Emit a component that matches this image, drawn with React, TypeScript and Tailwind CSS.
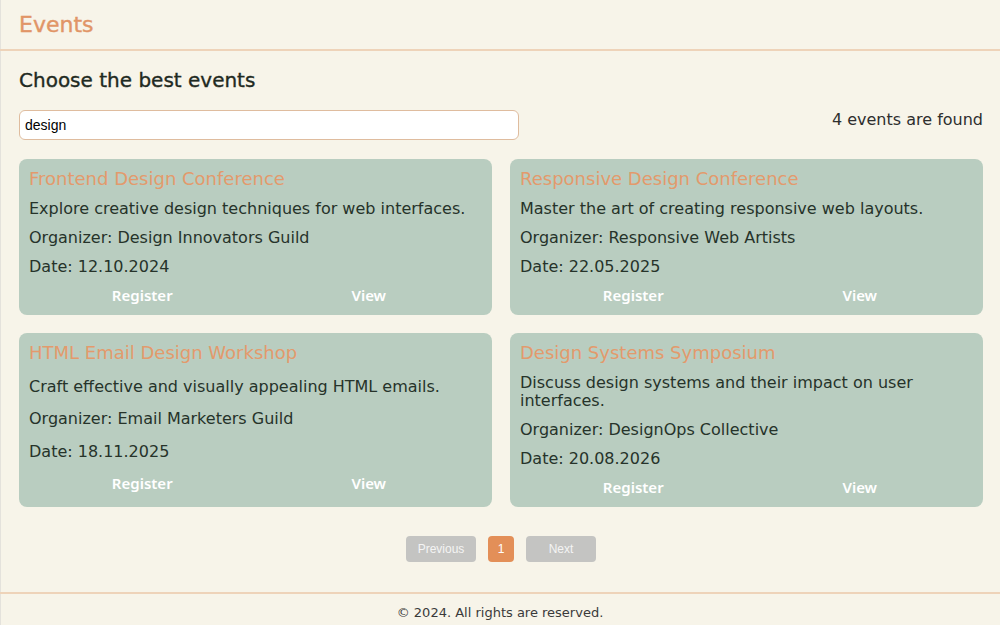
const events = [
  {
    title: "Frontend Design Conference",
    description: "Explore creative design techniques for web interfaces.",
    organizer: "Design Innovators Guild",
    date: "12.10.2024",
  },
  {
    title: "Responsive Design Conference",
    description: "Master the art of creating responsive web layouts.",
    organizer: "Responsive Web Artists",
    date: "22.05.2025",
  },
  {
    title: "HTML Email Design Workshop",
    description: "Craft effective and visually appealing HTML emails.",
    organizer: "Email Marketers Guild",
    date: "18.11.2025",
  },
  {
    title: "Design Systems Symposium",
    description: "Discuss design systems and their impact on user interfaces.",
    organizer: "DesignOps Collective",
    date: "20.08.2026",
  },
];

function EventCard({ e }: { e: (typeof events)[number] }) {
  return (
    <div className="grid gap-[10px] rounded-[8px] bg-[#b9cdc0] px-[10px] pt-[9px] pb-[9px] text-[#26332a]">
      <h3 className="text-[18px] leading-[22px] text-[#e39a6c]">{e.title}</h3>
      <p className="text-[16px] leading-[18px]">{e.description}</p>
      <p className="text-[16px] leading-[19px]">Organizer: {e.organizer}</p>
      <p className="text-[16px] leading-[19px]">Date: {e.date}</p>
      <div className="flex -mt-[2px]">
        <button className="flex-1 h-[22px] text-[15px] leading-[22px] font-semibold text-white [font-family:'Noto_Sans',sans-serif]">
          Register
        </button>
        <button className="flex-1 h-[22px] text-[15px] leading-[22px] font-semibold text-white [font-family:'Noto_Sans',sans-serif]">
          View
        </button>
      </div>
    </div>
  );
}

export default function App() {
  return (
    <div className="min-h-[625px] w-full bg-[#f7f4e9] shadow-[inset_1px_0_0_#e4e2dc] flex flex-col [font-family:'DejaVu_Sans',sans-serif]">
      <header className="h-[51px] border-b-2 border-[#eed3b9] px-[19px] flex items-center">
        <h1 className="text-[22px] leading-[26px] font-medium text-[#e19567] [-webkit-text-stroke:0.4px_#e19567]">Events</h1>
      </header>
      <main className="pl-[19px] pr-[17px] pt-[17px]">
        <h2 className="text-[20px] leading-[24px] font-medium text-[#1f2a22] [-webkit-text-stroke:0.35px_#1f2a22]">Choose the best events</h2>
        <div className="mt-[18px] flex items-start justify-between">
          <input
            value="design"
            readOnly
            className="w-[500px] h-[30px] rounded-[6px] border border-[#dfbc9e] bg-white px-[5px] text-[14px] text-black outline-none [font-family:'Liberation_Sans',Arial,sans-serif]"
          />
          <span className="text-[16px] leading-[20px] text-[#2e2e2e]">4 events are found</span>
        </div>
        <div className="mt-[19px] grid grid-cols-2 gap-[18px]">
          {events.map((e) => (
            <EventCard key={e.title} e={e} />
          ))}
        </div>
        <div className="mt-[29px] flex justify-center gap-[12px] [font-family:'Liberation_Sans',Arial,sans-serif]">
          <button className="w-[70px] h-[26px] rounded-[4px] bg-[#c4c4c2] text-[12px] text-[#f4f4f4]">Previous</button>
          <button className="w-[26px] h-[26px] rounded-[4px] bg-[#e38f58] text-[12px] text-white">1</button>
          <button className="w-[70px] h-[26px] rounded-[4px] bg-[#c4c4c2] text-[12px] text-[#f4f4f4]">Next</button>
        </div>
      </main>
      <footer className="mt-[30px] border-t-2 border-[#eed3b9] h-[40px] flex items-center justify-center">
        <span className="text-[13px] text-[#3a3a3a]">© 2024. All rights are reserved.</span>
      </footer>
    </div>
  );
}
